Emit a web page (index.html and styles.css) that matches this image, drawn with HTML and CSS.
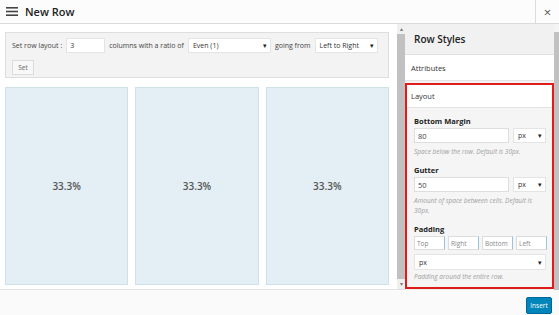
FILE: index.html
```html
<!DOCTYPE html>
<html lang="en">
<head>
  <meta charset="UTF-8" />
  <title>New Row</title>
  <link rel="stylesheet" href="styles.css">
</head>
<body>
  <div class="modal">
    <div class="header">
      <div class="menu-icon">
        <svg width="12" height="9" viewBox="0 0 12 9"><rect y="0" width="12" height="1.6" fill="#444"/><rect y="3.7" width="12" height="1.6" fill="#444"/><rect y="7.4" width="12" height="1.6" fill="#444"/></svg>
      </div>
      <div class="title">New Row</div>
      <div class="close">&times;</div>
    </div>

    <div class="body">
      <div class="main">
        <div class="main-content">
          <div class="layout-box">
            <div class="layout-row">
              <span>Set row layout :</span>
              <input class="num-input" type="text" value="3">
              <span>columns with a ratio of</span>
              <div class="select ratio">Even (1) <span class="caret">&#9662;</span></div>
              <span>going from</span>
              <div class="select dir">Left to Right <span class="caret">&#9662;</span></div>
            </div>
            <button class="set-btn">Set</button>
          </div>
          <div class="columns">
            <div class="col">33.3%</div>
            <div class="col">33.3%</div>
            <div class="col">33.3%</div>
          </div>
        </div>
        <div class="scrollbar">
          <span class="arrow">&#9652;</span>
          <div class="thumb"></div>
          <span class="arrow">&#9662;</span>
        </div>
      </div>

      <div class="sidebar">
        <div class="sidebar-content">
          <div class="side-title">Row Styles</div>
          <div class="section-head">Attributes</div>
          <div class="layout-panel">
            <div class="section-head">Layout</div>
            <div class="fields">
              <div class="label">Bottom Margin</div>
              <div class="field-row">
                <input class="text-input" type="text" value="80">
                <div class="select unit">px <span class="caret">&#9662;</span></div>
              </div>
              <div class="help">Space below the row. Default is 30px.</div>

              <div class="label">Gutter</div>
              <div class="field-row">
                <input class="text-input" type="text" value="50">
                <div class="select unit">px <span class="caret">&#9662;</span></div>
              </div>
              <div class="help">Amount of space between cells. Default is 30px.</div>

              <div class="label">Padding</div>
              <div class="pad-row">
                <input class="pad-input" type="text" placeholder="Top">
                <input class="pad-input" type="text" placeholder="Right">
                <input class="pad-input" type="text" placeholder="Bottom">
                <input class="pad-input" type="text" placeholder="Left">
              </div>
              <div class="select full">px <span class="caret">&#9662;</span></div>
              <div class="help">Padding around the entire row.</div>
            </div>
          </div>
        </div>
        <div class="scrollbar side">
          <div class="thumb"></div>
        </div>
      </div>
    </div>

    <div class="footer">
      <button class="insert-btn">Insert</button>
    </div>
  </div>
</body>
</html>
```

FILE: styles.css
```css
* {
  margin: 0;
  padding: 0;
  box-sizing: border-box;
  font-family: "Open Sans", sans-serif;
}

body {
  background: #fff;
  color: #333;
}

.modal {
  width: 559px;
  height: 315px;
  display: flex;
  flex-direction: column;
  overflow: hidden;
}

.header {
  height: 24px;
  flex-shrink: 0;
  display: flex;
  align-items: center;
  border-bottom: 1px solid #dcdcdc;
  background: #fcfcfc;
}

.menu-icon {
  width: 25px;
  padding-left: 6px;
  display: flex;
  align-items: center;
}

.title {
  flex: 1;
  font-size: 11px;
  font-weight: 600;
  color: #222;
}

.close {
  width: 24px;
  height: 23px;
  border-left: 1px solid #dcdcdc;
  display: flex;
  align-items: center;
  justify-content: center;
  font-size: 13px;
  color: #555;
}

.body {
  height: 266px;
  flex-shrink: 0;
  display: flex;
}

.main {
  width: 405px;
  flex-shrink: 0;
  display: flex;
  border-bottom: 1px solid #e2e2e2;
}

.main-content {
  flex: 1;
  min-width: 0;
  padding: 8px 8px 0 5px;
}

.layout-box {
  background: #f3f3f3;
  border: 1px solid #dedede;
  padding: 5px 6px 6px 6px;
  height: 46px;
}

.layout-row {
  display: flex;
  align-items: center;
  gap: 4px;
  font-size: 7px;
  color: #444;
  white-space: nowrap;
}

.layout-row > * {
  flex-shrink: 0;
}

.num-input {
  width: 39px;
  height: 15px;
  border: 1px solid #e4e4e4;
  background: #fff;
  font-size: 7px;
  padding-left: 3px;
  color: #333;
}

.select {
  height: 15px;
  background: #fff;
  border: 1px solid #e4e4e4;
  display: flex;
  align-items: center;
  justify-content: space-between;
  padding: 0 3px 0 4px;
  font-size: 7px;
  color: #333;
}

.caret {
  font-size: 7px;
  color: #222;
}

.ratio {
  width: 83px;
}

.dir {
  width: 63px;
}

.set-btn {
  margin-top: 3px;
  width: 22px;
  height: 15px;
  border: 1px solid #dcdcdc;
  background: #f8f8f8;
  font-size: 6.5px;
  color: #666;
}

.columns {
  display: flex;
  gap: 7px;
  margin-top: 9px;
  height: 198px;
}

.col {
  flex: 1;
  background: #e3eff5;
  border: 1px solid #cfe1e8;
  display: flex;
  align-items: center;
  justify-content: center;
  font-size: 10px;
  font-weight: 600;
  color: #555;
}

.scrollbar {
  width: 8px;
  flex-shrink: 0;
  background: #f0f0f0;
  display: flex;
  flex-direction: column;
  align-items: center;
}

.scrollbar .arrow {
  font-size: 6px;
  color: #777;
  height: 10px;
  line-height: 10px;
}

.scrollbar .thumb {
  flex: 1;
  width: 8px;
  background: #c1c1c1;
}

.scrollbar.side {
  width: 5px;
  padding-top: 8px;
  background: #f4f4f4;
}

.scrollbar.side .thumb {
  width: 5px;
}

.sidebar {
  flex: 1;
  display: flex;
  background: #f1f1f1;
  min-width: 0;
}

.sidebar-content {
  flex: 1;
  min-width: 0;
}

.side-title {
  height: 31px;
  display: flex;
  align-items: center;
  padding-left: 9px;
  font-size: 10px;
  font-weight: 600;
  color: #222;
  background: #f1f1f1;
  border-bottom: 1px solid #e0e0e0;
}

.section-head {
  height: 26px;
  display: flex;
  align-items: center;
  padding-left: 6px;
  font-size: 7.5px;
  color: #333;
  background: #fff;
  border-bottom: 1px solid #e4e4e4;
}

.layout-panel {
  margin-top: 2px;
  border: 2px solid #e01b1b;
  height: 206px;
  overflow: hidden;
  background: #f5f5f5;
}

.layout-panel .section-head {
  height: 23px;
  padding-left: 4px;
}

.fields {
  padding: 8px 6px 0 7px;
}

.label {
  font-size: 7.5px;
  font-weight: 700;
  color: #222;
  margin-bottom: 2px;
}

.field-row {
  display: flex;
  gap: 4px;
}

.text-input {
  width: 95px;
  height: 15px;
  border: 1px solid #dedede;
  background: #fff;
  font-size: 7.5px;
  padding-left: 3px;
  color: #444;
}

.unit {
  width: 33px;
}

.help {
  font-size: 6.5px;
  font-style: italic;
  color: #a0a0a0;
  margin: 4px 0 8px;
  line-height: 10px;
}

.pad-row {
  display: flex;
  gap: 3px;
}

.pad-input {
  width: 31px;
  height: 14px;
  border: 1px solid #dcdcdc;
  border-right-color: #9ec2dc;
  background: #fff;
  font-size: 6.5px;
  padding-left: 2px;
}

.pad-input::placeholder {
  color: #888;
}

.full {
  margin-top: 4px;
  width: 132px;
  height: 16px;
}

.full + .help {
  margin-top: 2px;
}

.footer {
  height: 25px;
  flex-shrink: 0;
  background: #fafafa;
  display: flex;
  align-items: center;
  justify-content: flex-end;
  padding-right: 7px;
}

.insert-btn {
  width: 26px;
  height: 17px;
  margin-top: 6px;
  border: 1px solid #006799;
  background: #0085ba;
  color: #fff;
  font-size: 6.5px;
  border-radius: 2px;
}
```
